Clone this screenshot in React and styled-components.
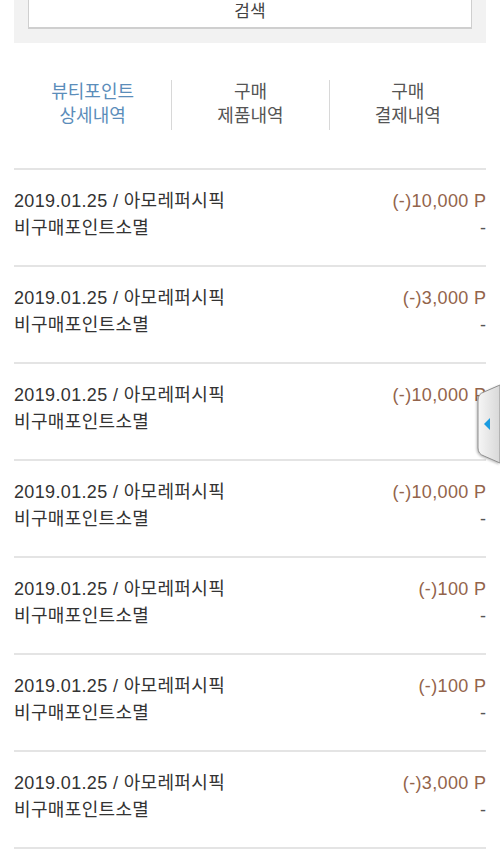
import React from "react";
import styled, { createGlobalStyle } from "styled-components";

const GlobalStyle = createGlobalStyle`
  html, body { margin: 0; padding: 0; background: #fff; }
  body { font-family: "Liberation Sans", "Noto Sans CJK KR", sans-serif; color: #333; }
  * { box-sizing: border-box; }
`;

const Page = styled.div`
  position: relative;
  width: 500px;
  padding: 0 14px;
  overflow: hidden;
`;

const SearchPanel = styled.div`
  background: #f2f2f2;
  padding: 0 14px 14px;
`;

const SearchButton = styled.button`
  display: block;
  width: 100%;
  height: 29px;
  background: #fff;
  border: 1px solid #cfcfcf;
  border-top: none;
  border-bottom-width: 2px;
  padding: 0 0 4px;
  font-family: inherit;
  font-size: 17px;
  line-height: 23px;
  color: #444;
`;

const Tabs = styled.div`
  display: grid;
  grid-template-columns: repeat(3, 1fr);
  margin-top: 37px;
  margin-bottom: 38px;
`;

const Tab = styled.div`
  height: 50px;
  display: flex;
  flex-direction: column;
  align-items: center;
  font-size: 18px;
  line-height: 24px;
  color: ${(p) => (p.$active ? "#5b8dba" : "#555")};
  border-left: ${(p) => (p.$first ? "none" : "1px solid #d8d8d8")};
`;

const List = styled.div`
  border-top: 2px solid #e4e4e4;
`;

const Row = styled.div`
  display: flex;
  justify-content: space-between;
  padding: 18px 0 23px;
  border-bottom: 2px solid #e4e4e4;
  font-size: 18px;
  line-height: 27px;
  letter-spacing: 0.35px;
`;

const Col = styled.div`
  display: flex;
  flex-direction: column;
  align-items: ${(p) => (p.$right ? "flex-end" : "flex-start")};
`;

const Line = styled.span`
  color: ${(p) => p.$color || "#333"};
  white-space: nowrap;
  margin-right: ${(p) => (p.$right ? "-0.35px" : "0")};
`;

const Handle = styled.div`
  position: absolute;
  right: 0;
  top: 384px;
  width: 24px;
  height: 80px;
  filter: drop-shadow(-1px 1px 1px rgba(0, 0, 0, 0.25));
`;

const rows = [
  "(-)10,000 P",
  "(-)3,000 P",
  "(-)10,000 P",
  "(-)10,000 P",
  "(-)100 P",
  "(-)100 P",
  "(-)3,000 P",
];

export default function App() {
  return (
    <>
      <GlobalStyle />
      <Page>
        <SearchPanel>
          <SearchButton>검색</SearchButton>
        </SearchPanel>
        <Tabs>
          <Tab $active $first>
            <span>뷰티포인트</span>
            <span>상세내역</span>
          </Tab>
          <Tab>
            <span>구매</span>
            <span>제품내역</span>
          </Tab>
          <Tab>
            <span>구매</span>
            <span>결제내역</span>
          </Tab>
        </Tabs>
        <List>
          {rows.map((amt, i) => (
            <Row key={i}>
              <Col>
                <Line>2019.01.25 / 아모레퍼시픽</Line>
                <Line>비구매포인트소멸</Line>
              </Col>
              <Col $right>
                <Line $right $color="#93644b">{amt}</Line>
                <Line $right $color="#555">-</Line>
              </Col>
            </Row>
          ))}
        </List>
        <Handle>
          <svg width="24" height="80" viewBox="0 0 24 80">
            <defs>
              <linearGradient id="hg" x1="0" x2="1" y1="0" y2="0">
                <stop offset="0" stopColor="#f6f6f6" />
                <stop offset="1" stopColor="#d8d8d8" />
              </linearGradient>
            </defs>
            <path
              d="M24 1 L8 8 Q2 10 2 16 L2 64 Q2 70 8 72 L24 79 Z"
              fill="url(#hg)"
              stroke="#8f8f8f"
              strokeWidth="1"
            />
            <path d="M8 40 L14 34 L14 46 Z" fill="#1a9be0" />
          </svg>
        </Handle>
      </Page>
    </>
  );
}
